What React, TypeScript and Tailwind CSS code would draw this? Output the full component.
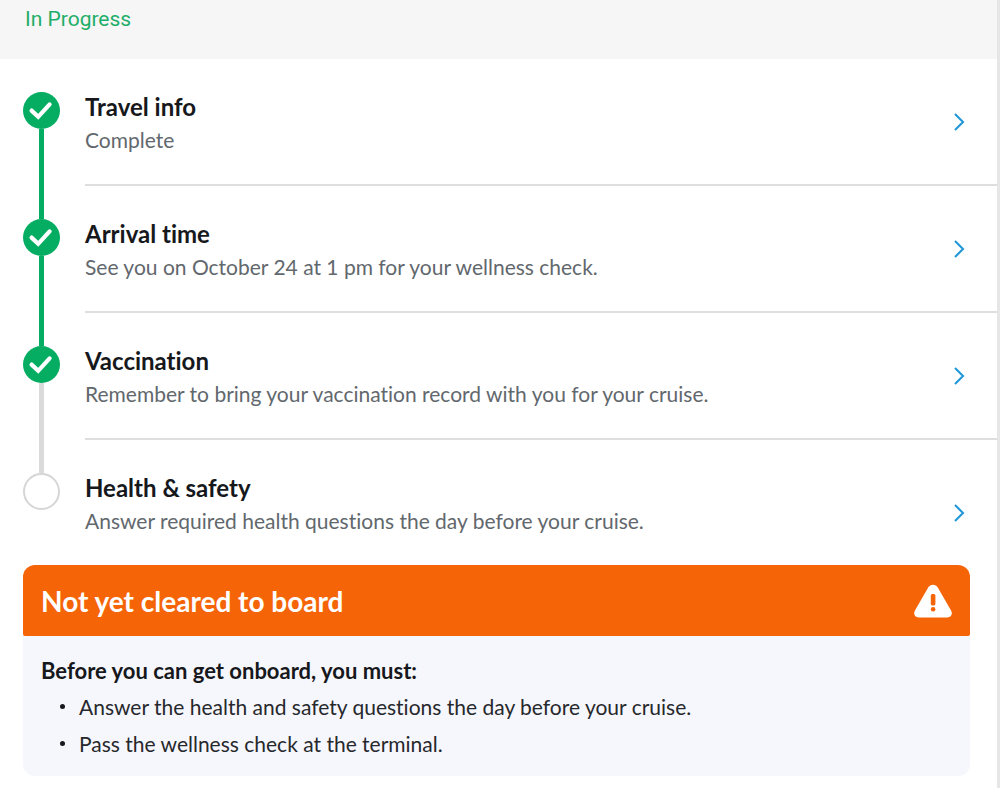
import React from "react";
import clsx from "clsx";

type Step = {
  title: string;
  detail: string;
  done: boolean;
};

const steps: Step[] = [
  { title: "Travel info", detail: "Complete", done: true },
  {
    title: "Arrival time",
    detail: "See you on October 24 at 1 pm for your wellness check.",
    done: true,
  },
  {
    title: "Vaccination",
    detail:
      "Remember to bring your vaccination record with you for your cruise.",
    done: true,
  },
  {
    title: "Health & safety",
    detail: "Answer required health questions the day before your cruise.",
    done: false,
  },
];

const requirements = [
  "Answer the health and safety questions the day before your cruise.",
  "Pass the wellness check at the terminal.",
];

const CheckMark: React.FC = () => (
  <svg className="size-[37px]" viewBox="0 0 37 37" fill="none" aria-hidden="true">
    <path
      d="M8.6 18.6L15.2 24.8L26.6 12.4"
      stroke="#fff"
      strokeWidth="4.2"
      strokeLinecap="round"
    />
  </svg>
);

const Chevron: React.FC = () => (
  <svg className="h-5 w-3 shrink-0" viewBox="0 0 12 20" fill="none" aria-hidden="true">
    <path d="M2 2L10 10L2 18" stroke="#2197d8" strokeWidth="2.1" />
  </svg>
);

const WarningIcon: React.FC = () => (
  <svg className="h-[34px] w-[38px] shrink-0" viewBox="0 0 38 34" aria-hidden="true">
    <path
      d="M14.2 3.4C16.4 -0.1 21.6 -0.1 23.8 3.4L36.9 26.2C39 29.8 37.4 33.4 33.4 33.4H4.6C0.6 33.4 -1 29.8 1.1 26.2Z"
      fill="#fff"
    />
    <rect x="16.8" y="10" width="4.6" height="11.4" rx="1.6" fill="#f56407" />
    <circle cx="19.1" cy="25.2" r="2.3" fill="#f56407" />
  </svg>
);

const StepRow: React.FC<{ step: Step; next?: Step; first: boolean }> = ({
  step,
  next,
  first,
}) => (
  <li className="flex">
    {/* Rail: the upper piece joins the previous step */}
    <div className="flex w-[85px] shrink-0 flex-col pl-[23px]">
      <div className="flex h-[33px] w-[37px] justify-center">
        {!first && (
          <div className={clsx("w-[5px]", step.done ? "bg-[#05ad62]" : "bg-[#dadada]")} />
        )}
      </div>
      <div
        className={clsx(
          "size-[37px] rounded-full",
          step.done ? "bg-[#05ad62]" : "border-2 border-[#d6d6d6] bg-white"
        )}
      >
        {step.done && <CheckMark />}
      </div>
      <div className="flex w-[37px] flex-1 justify-center">
        {next && (
          <div className={clsx("w-[5px]", next.done ? "bg-[#05ad62]" : "bg-[#dadada]")} />
        )}
      </div>
    </div>

    <button
      type="button"
      className={clsx(
        "flex flex-1 cursor-pointer justify-between pt-8 pr-8 pb-7 text-left",
        next ? "items-center border-b-2 border-[#dedede]" : "items-end"
      )}
    >
      <span className="block">
        <span className="block text-[24px] leading-8 font-bold text-[#16181c]">
          {step.title}
        </span>
        <span className="mt-px block text-[21px] leading-8 text-[#62686d]">
          {step.detail}
        </span>
      </span>
      <span className={clsx("flex", next ? "pb-1" : "pb-3.5")}>
        <Chevron />
      </span>
    </button>
  </li>
);

const App: React.FC = () => {
  return (
    <div className="min-h-screen border-r-[3px] border-[#e6e6e6] bg-white font-['Lato',sans-serif] [font-variant-ligatures:none]">
      <header className="h-[59px] bg-[#f6f6f6] pt-1 pl-[25px]">
        <p className="font-['Roboto',sans-serif] text-[21px] leading-[30px] text-[#1fae69]">
          In Progress
        </p>
      </header>

      <main className="pb-3">
        <ol>
          {steps.map((step, i) => (
            <StepRow
              key={step.title}
              step={step}
              next={steps[i + 1]}
              first={i === 0}
            />
          ))}
        </ol>

        <section className="mr-[27px] ml-[23px] rounded-xl bg-[#f6f7fc]">
          <div className="flex h-[71px] items-center justify-between rounded-t-xl rounded-b-xs bg-[#f56407] px-[18px]">
            <h2 className="text-[28px] leading-8 font-bold text-white">
              Not yet cleared to board
            </h2>
            <WarningIcon />
          </div>
          <div className="px-[18px] pt-[18px] pb-3.5 text-[21px] text-[#26282c]">
            <h3 className="text-[22px] leading-[34px] font-bold text-[#16181c]">
              Before you can get onboard, you must:
            </h3>
            <ul>
              {requirements.map((item) => (
                <li key={item} className="flex items-center leading-[37px]">
                  <span className="mr-[14px] ml-[19px] size-[5px] rounded-full bg-[#16181c]" />
                  {item}
                </li>
              ))}
            </ul>
          </div>
        </section>
      </main>
    </div>
  );
};

export default App;
